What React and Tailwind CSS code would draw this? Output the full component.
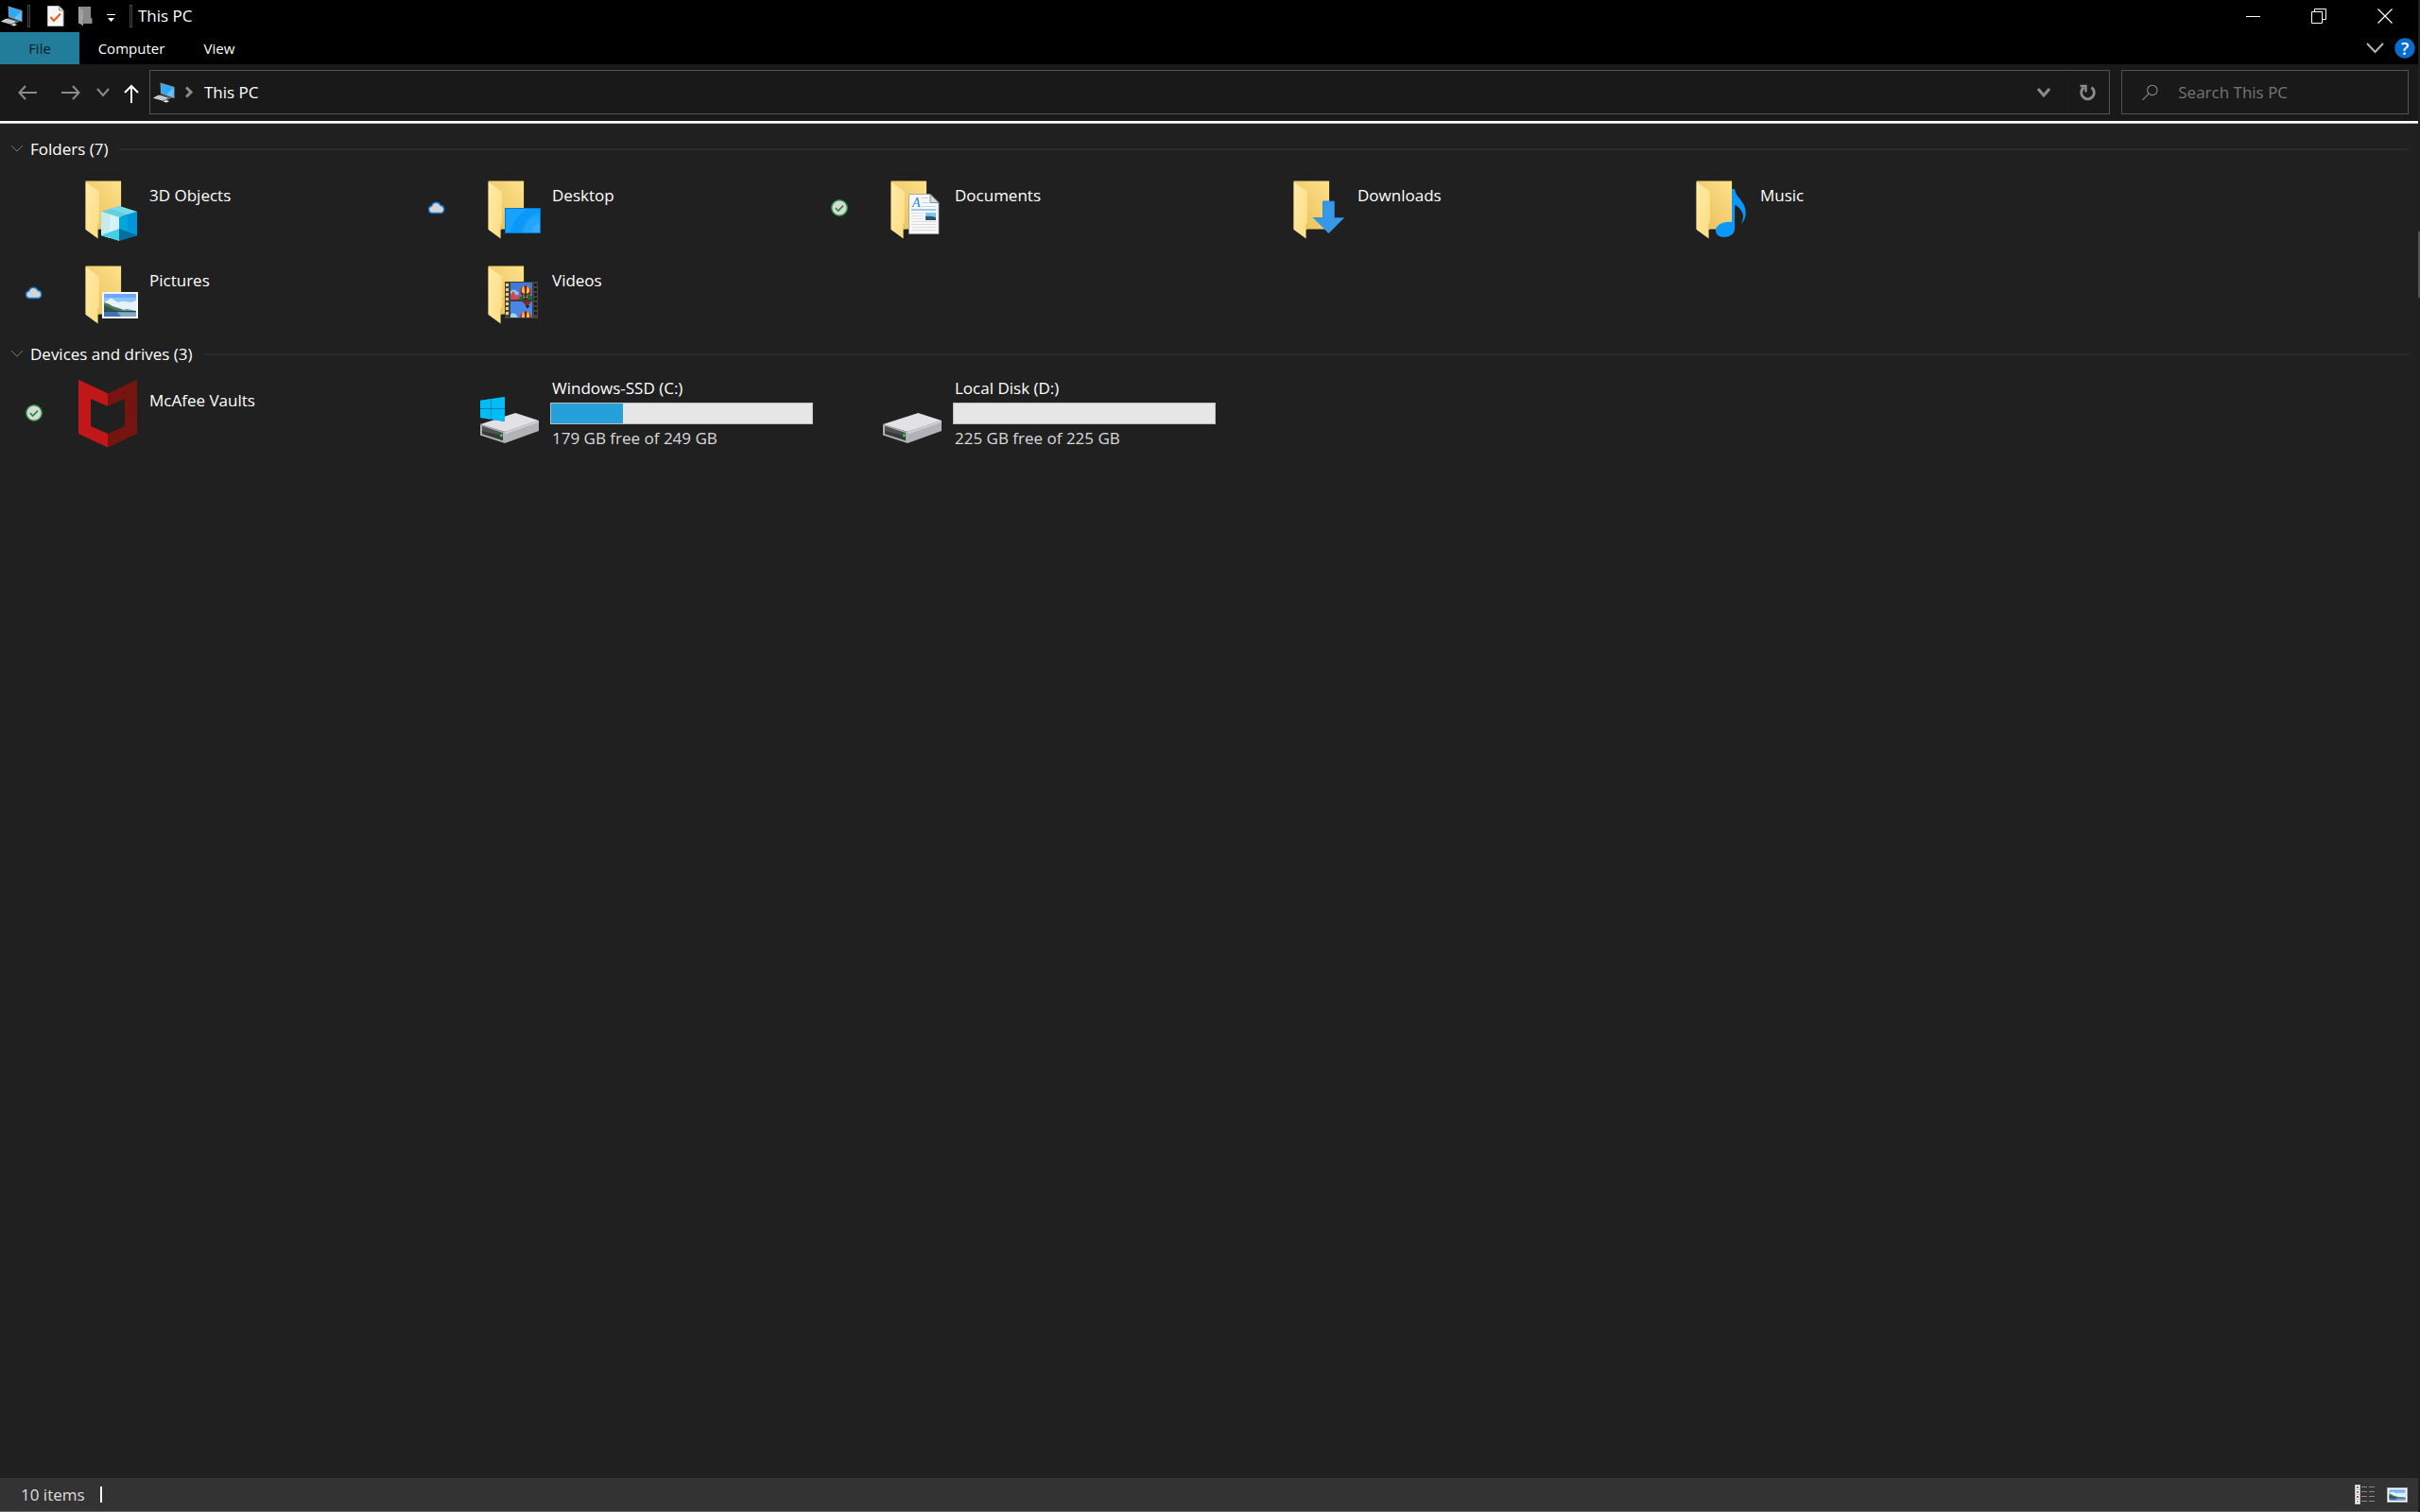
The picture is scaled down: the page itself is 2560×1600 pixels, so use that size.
import React, { useState } from "react";

const folders = [
  { name: "3D Objects", art: "objects" },
  { name: "Desktop", art: "desktop", sync: "cloud" },
  { name: "Documents", art: "documents", sync: "done" },
  { name: "Downloads", art: "downloads" },
  { name: "Music", art: "music" },
  { name: "Pictures", art: "pictures", sync: "cloud" },
  { name: "Videos", art: "videos" },
];

const drives = [
  { name: "McAfee Vaults", art: "mcafee", sync: "done" },
  { name: "Windows-SSD (C:)", art: "system", free: 179, total: 249 },
  { name: "Local Disk (D:)", art: "disk", free: 225, total: 225 },
];

const PcIcon = () => (
  <svg width="24" height="24" viewBox="0 0 24 24" aria-hidden="true">
    <path d="M8.5 1.5 23.5 6v12.3L9 13z" fill="#8f989f" />
    <path d="M9.6 2.8 22.7 6.8v10.1L10 12.2z" fill="#2ea8fb" />
    <path d="M22.7 6.8v10.1L15 14z" fill="#63c3ff" />
    <path d="M1 17.5 9 14l12 3.5-6 3z" fill="#5d6870" />
    <path d="m1 17.8 5.500-3 10 3-5 3z" fill="#dfe6ea" />
    <path d="m4 17.2 8 2.5M6 16.2l8 2.6" stroke="#8b979f" strokeWidth="0.7" />
    <path d="m11.5 21.5 3-1.6 3.6 1-3 1.6z" fill="#e6ecef" />
  </svg>
);

const CheckDocIcon = () => (
  <svg width="18" height="22" viewBox="0 0 18 22" aria-hidden="true">
    <path d="M.5.5h12l4.500 4.500v16.500H.5z" fill="#f8f8f8" stroke="#b9b9b9" />
    <path d="M12.500.5V5H17" fill="#dcdcdc" stroke="#8d8d8d" />
    <path d="m3.500 12 3.300 4L14 8.500" fill="none" stroke="#f0560f" strokeWidth="2" />
  </svg>
);

const GrayFolderIcon = () => (
  <svg width="15" height="21" viewBox="0 0 15 21" aria-hidden="true">
    <path d="M0 0h13v11l1.500 2v5H0z" fill="#8a8a8a" />
    <path d="m0 0 5 4v16.500L0 17z" fill="#a0a0a0" />
    <path d="M5 13v6" stroke="#6c6c6c" strokeWidth="0.700" />
  </svg>
);

const Chevron = ({ size, height, width, className }) => (
  <svg
    width={size}
    height={height}
    viewBox={`0 0 ${size} ${height}`}
    className={className}
    fill="none"
    stroke="currentColor"
    strokeWidth={width}
    aria-hidden="true"
  >
    <path d={`M1 1 ${size / 2} ${height - 2} ${size - 1} 1`} />
  </svg>
);

const CloudIcon = () => (
  <svg width="20" height="14" viewBox="0 0 20 14" role="img" aria-label="Available when online">
    <path
      d="M5 12.500a3.800 3.800 0 0 1-.4-7.500A5 5 0 0 1 14 4.200a4.300 4.300 0 0 1 1 8.300z"
      fill="#d4d4d4"
      stroke="#0c78d2"
      strokeWidth="1.400"
    />
  </svg>
);

const DoneIcon = () => (
  <svg width="20" height="20" viewBox="0 0 20 20" role="img" aria-label="Available on this device">
    <circle cx="10" cy="10" r="8.300" fill="#d8d8d8" stroke="#1f9a37" strokeWidth="1.400" />
    <path d="m5.800 10 2.900 3 5.300-5.400" fill="none" stroke="#1b8a30" strokeWidth="1.600" />
  </svg>
);

const FolderBase = () => (
  <g transform="translate(.6 0)">
    <path d="M12 8h37.500v50.500H12z" fill="url(#folderBack)" />
    <path d="M12 7.500h37.500" stroke="#8f7d48" />
    <path d="m12 8.500 14.200 10v33l-1.200 2v15L12 59z" fill="url(#folderFront)" />
    <path d="m25 53.500 1.200-2V59H25z" fill="#e8bf5a" />
  </g>
);

// Shared sky / hills / lake scene, 34 x 24
const Landscape = () => (
  <>
    <path d="M0 0h34v24H0z" fill="#6ba6ff" />
    <path d="M0 4h34v10H0z" fill="#8fc4f7" />
    <path d="M0 9q2-1 4-2 3-4 6-1 3 2 5 3 4-2 8-1l5 1 6-2v12H0z" fill="#e4f4fb" />
    <path d="M0 9q5 1 9 4 7 2 12 4l8 2H0z" fill="#52755b" />
    <path d="M0 12q6 2 11 5l9 2H0z" fill="#2f5745" />
    <path d="m17 18 7-2 10 2v1H17z" fill="#6f927f" />
    <path d="M0 18.500h34V24H0z" fill="#3e72b0" />
    <path d="M14 19.500h20V24H18z" fill="#86a9c8" />
    <path d="M0 18h34v1H0z" fill="#224c5a" />
  </>
);

const Balloon = ({ x, y }) => (
  <g transform={`translate(${x} ${y})`}>
    <path d="M-5.700-1a5.700 5.400 0 0 1 11.400 0q0 4-3.700 7h-4q-3.700-3-3.700-7z" fill="#c9212a" />
    <path d="M-4-2q.5-4 2-4.200Q-1-4-1-1l.3 7h-1Q-4 2-4-2z" fill="#f6c32c" />
    <path d="M4-2q-.5-4-2-4.200Q1-4 1-1l-.3 7h1Q4 2 4-2z" fill="#f6c32c" />
    <path d="M0-6.500V6M-5 1q5 3 10 0M-3.500 4h7" fill="none" stroke="#20242f" strokeWidth="1.100" />
    <path d="M-2 6.500h4L1 9h-2z" fill="#30251e" />
  </g>
);

const Drive = () => (
  <>
    <path d="M4 48 41.300 36 66 44 30 56z" fill="#e2e2e6" />
    <path d="m30 56 36-12v11L30 68z" fill="#b2b3b6" />
    <path d="m30 56 36-12v2L30 58.500z" fill="#d0d0d3" />
    <path d="m4 48 26 8v12L4 59.500z" fill="#b0b1b2" />
    <path d="m6 50 22 7.200v8L6 58.200z" fill="#35393b" />
    <path d="m6 50 22 7.200v3L6 55z" fill="#4d5254" />
    <circle cx="26.300" cy="60" r="1.400" fill="#2fe43b" />
  </>
);

const tileArt = {
  objects: (
    <>
      <FolderBase />
      <path d="m29 40 19-6 19 6-19 6z" fill="#62d0e4" />
      <path d="m48 34 19 6-9.500 3L39 37z" fill="#76dcec" />
      <path d="m29 40 19 6v24.700L29 65z" fill="#d6f1f7" />
      <path d="m29 40 9 3v25l-9-3z" fill="#c4ecec" />
      <path d="m48 46 19-6v25l-19 5.700z" fill="#00a7da" />
      <path d="m57 43 10-3v25l-10 3z" fill="#0096dc" />
      <path d="m29 65 19-7v12.700z" fill="#40d2e4" />
      <path d="m48 58 19 7-19 5.700z" fill="#046e9c" />
    </>
  ),
  desktop: (
    <>
      <FolderBase />
      <path d="M30 36h38v27H30z" fill="#0678ca" />
      <path d="M31 37h36v25H31z" fill="#18a2fc" />
      <path d="M55 37h12v4q-16 4-19 21H36q4-18 19-25z" fill="#0a99fa" />
      <path d="M67 44v18H50q3-14 17-18z" fill="#22a5fd" />
      <path d="M67 51v11h-9q2-8 9-11z" fill="#36aefd" />
    </>
  ),
  documents: (
    <>
      <FolderBase />
      <path d="M31.500 21.500h22.500l9 9v33H31.500z" fill="#f8f8f8" stroke="#9c9c9c" strokeWidth="0.800" />
      <path d="M54 21.500v9h9z" fill="#d9dadd" stroke="#777" strokeWidth="0.800" />
      <text x="35" y="35" fontFamily="Liberation Serif, serif" fontStyle="italic" fontSize="14" fill="#2286d0">
        A
      </text>
      <path d="M45 25.500h7M45 30.500h8M45 34.500h15" stroke="#b9d8ee" />
      <path d="M34 38h26" stroke="#86bfe4" strokeWidth="1.600" />
      <path d="M34 41.500h13M34 44.500h13M34 47.500h13M34 50.500h26M34 53.500h26M34 56.500h26M34 59.500h26" stroke="#dedede" />
      <path d="M49 41h11v8H49z" fill="#7cc6f5" />
      <path d="M49 45q5-1 11 1v3H49z" fill="#2d556b" />
    </>
  ),
  downloads: (
    <>
      <FolderBase />
      <path d="M43.500 29h12v17.500H66L49.500 63 33 46.500h10.500z" fill="#3898e8" />
      <path d="M33 46.500h10.500V29h12v17.500H66" fill="none" stroke="#257fce" strokeWidth="0.800" />
    </>
  ),
  music: (
    <>
      <FolderBase />
      <path
        d="M50 16h3q1 6 6 11 9 11 4 22l-3 4q4-9 0-14-3-5-7-6v25c0 6-6 9-11 9-6 0-9-3-9-7 0-6 8-10 17-9z"
        fill="#0a98fb"
      />
    </>
  ),
  pictures: (
    <>
      <FolderBase />
      <path d="M30 35h38v28H30z" fill="#f4f8fb" />
      <g transform="translate(32 37)">
        <Landscape />
      </g>
    </>
  ),
  videos: (
    <>
      <FolderBase />
      <path d="M30 24h5v39h-5zM59 24h6v39h-6z" fill="#48443b" />
      <path d="M35 24h25v39H35z" fill="#3c3c3c" />
      <path d="M32.500 26v35" stroke="#ecd27c" strokeWidth="3" strokeDasharray="3 2" />
      <path d="M62.500 26v35" stroke="#191919" strokeWidth="3" strokeDasharray="3 2" />
      <svg x="36" y="25" width="23" height="18" viewBox="0 0 23 18">
        <path d="M0 0h23v18H0z" fill="#4279d4" />
        <path d="M0 9q4-4 9 2v7H0z" fill="#8fc6e8" />
        <path d="m0 13 3-4 3 5 2-2 3 6H0z" fill="#cf4656" />
        <path d="M10 15q7-2 13-1v4H9z" fill="#0c7038" />
        <Balloon x={16} y={10} />
      </svg>
      <svg x="36" y="45" width="23" height="17" viewBox="0 0 23 17">
        <path d="M0 0h23v17H0z" fill="#4a87e4" />
        <path d="M0 14q4-4 8 3H0z" fill="#a5d4e8" />
        <path d="M12 0h10l-3 4h-3z" fill="#8a2529" />
        <path d="M16 4h4l-1 3h-2z" fill="#222" />
        <Balloon x={16} y={17} />
      </svg>
    </>
  ),
  mcafee: (
    <>
      <path d="m5 .7 31 14.600V29l-18-8v29l18 8v14.500L5 58z" fill="#c01818" />
      <path d="M67 .7 36 15.300V29l18-8v29l-18 8v14.500L67 58z" fill="#76150f" />
    </>
  ),
  system: (
    <>
      <Drive />
      <path d="M4 22.700 30 19v26L4 41z" fill="#056c8e" />
      <path d="m4 22.700 11.300-1.600v9.900H4zM16 21l14-2v12H16zM4 31.800h11.300V42.700L4 41zM16 31.800h14V45l-14-2.200z" fill="#00bdf5" />
    </>
  ),
  disk: <Drive />,
};

const CapacityBar = ({ free, total }) => (
  <div className="my-[3px] -ml-[2px] h-[23px] w-[278px] border border-[#bcbcbc] bg-[#e6e6e6]">
    <div className="h-full bg-[#26a0da]" style={{ width: `${((total - free) / total) * 98}%` }} />
  </div>
);

const Tile = ({ item }) => (
  <button type="button" className="flex h-[90px] items-center text-left hover:bg-[#2d2d2d]">
    <span className="flex w-[72px] shrink-0 justify-center">
      {item.sync === "cloud" && <CloudIcon />}
      {item.sync === "done" && <DoneIcon />}
    </span>
    <svg viewBox="0 0 72 72" className="mx-[6px] size-[72px] shrink-0" aria-hidden="true">
      {tileArt[item.art]}
    </svg>
    {item.total ? (
      <span className="ml-[2px] block">
        <span className="block">{item.name}</span>
        <CapacityBar free={item.free} total={item.total} />
        <span className="block text-[#dadada]">
          {item.free} GB free of {item.total} GB
        </span>
      </span>
    ) : (
      <span className="ml-[2px] self-start pt-5">{item.name}</span>
    )}
  </button>
);

const Group = ({ title, items }) => {
  const [open, setOpen] = useState(true);

  return (
    <section className="mb-[2px]">
      <h2>
        <button
          type="button"
          onClick={() => setOpen(!open)}
          className="flex h-[35px] w-full items-center gap-3 pl-[11px]"
        >
          <span className="flex items-center gap-[7px]">
            <Chevron size={14} height={9} width={1} className="text-[#7a7a7a]" />
            {title} ({items.length})
          </span>
          <span className="h-[2px] grow bg-[#2b2b2b]" />
        </button>
      </h2>
      {open && (
        <div className="grid grid-cols-[repeat(auto-fill,426px)]">
          {items.map((item) => (
            <Tile key={item.name} item={item} />
          ))}
        </div>
      )}
    </section>
  );
};

const TitleBar = () => (
  <header className="flex h-[34px] items-center bg-black">
    <PcIcon />
    <span className="ml-[5px] h-6 w-[3px] border border-[#484848]" />
    <button type="button" aria-label="Properties" className="ml-[18px]">
      <CheckDocIcon />
    </button>
    <button type="button" aria-label="New folder" className="ml-[15px]">
      <GrayFolderIcon />
    </button>
    <button type="button" aria-label="Customize Quick Access Toolbar" className="ml-[15px] pt-1">
      <svg width="9" height="9" viewBox="0 0 9 9" fill="#fff" aria-hidden="true">
        <path d="M0 0h9v1H0zM1 4h7L4.500 8z" />
      </svg>
    </button>
    <span className="ml-[15px] h-6 w-[3px] border border-[#484848]" />
    <h1 className="ml-[6px] grow">This PC</h1>
    <button type="button" aria-label="Minimize" className="flex h-full w-[70px] items-center justify-center">
      <span className="h-px w-[15px] bg-white" />
    </button>
    <button type="button" aria-label="Restore" className="flex h-full w-[70px] items-center justify-center">
      <svg width="16" height="16" viewBox="0 0 16 16" fill="none" stroke="#fff" aria-hidden="true">
        <path d="M.5 3.500h11v12H.5zM3.500 3.500v-3h12v11h-4" />
      </svg>
    </button>
    <button type="button" aria-label="Close" className="flex h-full w-[70px] items-center justify-center">
      <svg width="16" height="16" viewBox="0 0 16 16" stroke="#fff" strokeWidth="1.200" aria-hidden="true">
        <path d="m.5.5 15 15m0-15-15 15" />
      </svg>
    </button>
  </header>
);

const RibbonTabs = () => (
  <nav className="flex h-[34px] items-stretch bg-black text-[15px]">
    <button type="button" className="w-[84px] bg-[#217d9a] text-[#101c20]">
      File
    </button>
    <button type="button" className="w-[110px]">
      Computer
    </button>
    <button type="button" className="w-[76px]">
      View
    </button>
    <button type="button" aria-label="Expand the Ribbon" className="mr-[11px] ml-auto">
      <Chevron size={19} height={12} width={2} className="text-[#b4b4b4]" />
    </button>
    <button type="button" aria-label="Help" className="mr-[3px]">
      <svg width="22" height="22" viewBox="0 0 22 22" aria-hidden="true">
        <circle cx="11" cy="11" r="10.700" fill="#0a6ccc" />
        <text x="11" y="17.500" textAnchor="middle" fontFamily="Open Sans, sans-serif" fontSize="18" fontWeight="600" fill="#fff">
          ?
        </text>
      </svg>
    </button>
  </nav>
);

const Arrow = ({ className }) => (
  <svg width="20" height="16" viewBox="0 0 20 16" fill="none" stroke="currentColor" strokeWidth="2" className={className} aria-hidden="true">
    <path d="M20 8H1.500M8 1 1.500 8 8 15" />
  </svg>
);

const AddressRow = () => (
  <div className="flex h-[60px] items-center bg-[#191919] pr-[10px] pb-[1px] pl-2">
    <button type="button" aria-label="Back" className="flex w-[42px] justify-center text-[#8c8c8c]">
      <Arrow />
    </button>
    <button type="button" aria-label="Forward" className="ml-1 flex w-[42px] justify-center text-[#8c8c8c]">
      <Arrow className="rotate-180" />
    </button>
    <button type="button" aria-label="Recent locations" className="ml-[2px] flex w-[22px] justify-center text-[#8c8c8c]">
      <Chevron size={14} height={10} width={2} />
    </button>
    <button type="button" aria-label="Up" className="mx-2 flex w-[22px] justify-center pt-[3px]">
      <svg width="16" height="20" viewBox="0 0 16 20" fill="none" stroke="#fff" strokeWidth="2" aria-hidden="true">
        <path d="M8 20V2M1 9l7-7 7 7" />
      </svg>
    </button>
    <div className="flex h-[47px] grow items-center border border-[#535353] pl-[2px]">
      <PcIcon />
      <svg width="9" height="13" viewBox="0 0 9 13" className="ml-[11px]" fill="none" stroke="#8c8c8c" strokeWidth="3" aria-hidden="true">
        <path d="m1 1.500 5 5-5 5" />
      </svg>
      <button type="button" className="ml-[11px]">
        This PC
      </button>
      <button type="button" aria-label="Previous locations" className="ml-auto flex h-full w-11 items-center justify-center text-[#8c8c8c]">
        <Chevron size={14} height={10} width={3} />
      </button>
      <button type="button" aria-label="Refresh" className="flex h-full w-[47px] items-center justify-center border-l border-[#151515]">
        <svg width="18" height="18" viewBox="0 0 18 18" fill="none" stroke="#8c8c8c" aria-hidden="true">
          <path d="M13.500 3.500a6.800 6.800 0 1 1-8 0" strokeWidth="2.800" />
          <path d="M1.500 2h6v6.500" strokeWidth="2.400" />
        </svg>
      </button>
    </div>
    <label className="ml-3 flex h-[47px] w-[304px] items-center border border-[#535353] pl-[21px]">
      <svg width="20" height="20" viewBox="0 0 20 20" fill="none" stroke="#868686" strokeWidth="1.300" aria-hidden="true">
        <circle cx="12.500" cy="7" r="6" />
        <path d="M8 11.500.5 19" />
      </svg>
      <input
        type="text"
        aria-label="Search This PC"
        placeholder="Search This PC"
        className="ml-[21px] w-full bg-transparent text-white outline-none placeholder:text-[#767676]"
      />
    </label>
  </div>
);

const StatusBar = () => (
  <footer className="flex h-[35px] items-center bg-[#333333] pr-[11px] pl-[22px] text-[#dedede]">
    <span>10 items</span>
    <span className="mr-auto ml-4 h-[17px] w-[2px] bg-white" />
    <button type="button" aria-label="Details view" className="mr-[13px]">
      <svg width="21" height="21" viewBox="0 0 21 21" aria-hidden="true">
        <path d="M0 0h6v21H0z" fill="#b9b9b9" />
        <path d="M1 1h4v4H1zM1 6h4v4H1zM1 11h4v4H1zM1 16h4v4H1z" fill="#fff" />
        <path d="M2 2h2v2H2z" fill="#3a7a9a" />
        <path d="M2 7h2v2H2z" fill="#a05a50" />
        <path d="M2 12h2v2H2z" fill="#c5401c" />
        <path d="M2 17h2v2H2z" fill="#9a9a9a" />
        <path d="M7 2.500h6m2 0h6M7 7.500h6m2 0h6M7 12.500h6m2 0h6M7 17.500h6m2 0h6" stroke="#8a8a8a" />
      </svg>
    </button>
    <button type="button" aria-label="Large icons view">
      <svg width="22" height="16" viewBox="0 0 38 28" preserveAspectRatio="none" aria-hidden="true">
        <path d="M0 0h38v28H0z" fill="#a5a5a5" />
        <path d="M1.500 1.500h35v25h-35z" fill="#fff" />
        <svg x="4" y="4" width="30" height="20" viewBox="0 0 34 24" preserveAspectRatio="none">
          <Landscape />
        </svg>
      </svg>
    </button>
  </footer>
);

const App = () => {
  return (
    <div className="flex min-h-screen bg-[#202020] font-['Open_Sans','Noto_Sans',sans-serif] text-[17px] leading-6 text-white">
      <svg className="absolute size-0" aria-hidden="true">
        <defs>
          <linearGradient id="folderBack" x1="0" y1="1" x2="1" y2="0">
            <stop offset="0.300" stopColor="#ecc766" />
            <stop offset="1" stopColor="#ffe28a" />
          </linearGradient>
          <linearGradient id="folderFront" x1="0" y1="0" x2="1" y2="1">
            <stop offset="0" stopColor="#ffeaa8" />
            <stop offset="1" stopColor="#fddd83" />
          </linearGradient>
        </defs>
      </svg>

      <div className="flex grow flex-col border-b border-[#6a6a6a]">
        <TitleBar />
        <RibbonTabs />
        <AddressRow />
        <div className="h-[3px] border-b border-[#b4b4b4] bg-white" />
        <main className="grow pt-[9px] pr-[9px]">
          <Group title="Folders" items={folders} />
          <Group title="Devices and drives" items={drives} />
        </main>
        <StatusBar />
      </div>

      <div className="w-[2px] shrink-0 bg-[#201f1d] pt-[245px]">
        <div className="h-[70px] bg-[#555452]" />
      </div>
    </div>
  );
};

export default App;
